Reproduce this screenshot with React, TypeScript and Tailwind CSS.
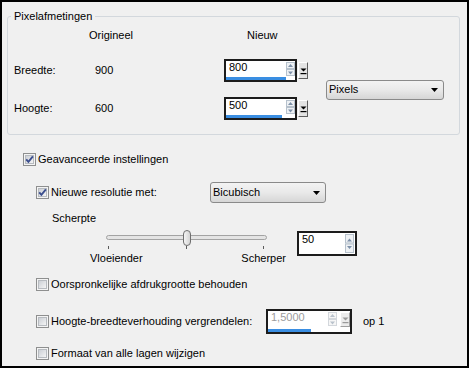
import React from "react";

function CheckBox({ checked }: { checked: boolean }) {
  return (
    <svg width="13" height="13" viewBox="0 0 13 13" className="block shrink-0">
      <defs>
        <linearGradient id="cbg" x1="0" y1="0" x2="1" y2="1">
          <stop offset="0" stopColor="#c9cdd3" />
          <stop offset="1" stopColor="#f7f7f7" />
        </linearGradient>
      </defs>
      <rect x="0.5" y="0.5" width="12" height="12" fill="#f4f4f4" stroke="#8e8f8f" />
      <rect x="2.5" y="2.5" width="8" height="8" fill="url(#cbg)" stroke="#b7bbc0" />
      {checked && (
        <path d="M3.2 6.3 L5.4 8.8 L9.9 3.3" fill="none" stroke="#3b4e8e" strokeWidth="1.9" />
      )}
    </svg>
  );
}

function Arrows({ h, disabled }: { h: number; disabled?: boolean }) {
  const half = h / 2;
  const stroke = disabled ? "#d3d7dc" : "#b6c1cc";
  const tri = disabled ? "#b9c2cc" : "#7d90a8";
  const fill = disabled ? "#f6f6f6" : "#eef1f4";
  return (
    <svg width="9" height={h} viewBox={`0 0 9 ${h}`} className="block shrink-0">
      <rect x="0.5" y="0.5" width="8" height={half - 1} fill={fill} stroke={stroke} />
      <rect x="0.5" y={half + 0.5} width="8" height={half - 1} fill={fill} stroke={stroke} />
      <path d={`M2 ${half - 2} L4.5 ${half - 5} L7 ${half - 2} Z`} fill={tri} />
      <path d={`M2 ${half + 2.5} L4.5 ${half + 5.5} L7 ${half + 2.5} Z`} fill={tri} />
    </svg>
  );
}

function MiniButton({ h, disabled }: { h: number; disabled?: boolean }) {
  const c = disabled ? "#9a9a9a" : "#000";
  return (
    <div
      className={`w-[10px] shrink-0 flex items-center justify-center border-t border-l border-t-white border-l-white border-r border-b ${
        disabled ? "border-r-[#a0a0a0] border-b-[#a0a0a0] bg-[#ececec]" : "border-r-[#5e5e5e] border-b-[#5e5e5e] bg-[#e4e4e4]"
      }`}
      style={{ height: h }}
    >
      <svg width="7" height="8" viewBox="0 0 7 8" className="block">
        <path d="M0.5 1.5 L6.5 1.5 L3.5 4.5 Z" fill={c} />
        <rect x="0.5" y="6" width="6" height="1.2" fill={c} />
      </svg>
    </div>
  );
}

function SpinBox({
  value,
  w,
  h,
  textW,
  bar,
  arrowsH,
  mini,
  disabled,
}: {
  value: string;
  w: number;
  h: number;
  textW: number;
  bar?: number;
  arrowsH: number;
  mini?: "outside" | "inside";
  disabled?: boolean;
}) {
  return (
    <div className="flex items-center shrink-0">
      <div
        className="border-2 border-[#1c1c1c] bg-white flex items-start shrink-0"
        style={{ width: w, height: h }}
      >
        <div className="flex flex-col justify-between h-full shrink-0" style={{ width: textW }}>
          <span className={`pl-[3px] h-[13px] ${disabled ? "text-[#9c9c9c]" : "text-black"}`}>{value}</span>
          {bar ? <div className="h-[3px] bg-[#3a8ee2]" style={{ width: bar }} /> : <div />}
        </div>
        <div className="mt-[1px]">
          <Arrows h={arrowsH} disabled={disabled} />
        </div>
        {mini === "inside" && (
          <div className="ml-[3px] mt-[1px]">
            <MiniButton h={15} disabled={disabled} />
          </div>
        )}
      </div>
      {mini === "outside" && (
        <div className="ml-[1px]">
          <MiniButton h={17} />
        </div>
      )}
    </div>
  );
}

function Dropdown({ label, w, h }: { label: string; w: number; h: number }) {
  return (
    <div
      className="flex items-center justify-between rounded-[3px] border border-[#8a8a8a] bg-gradient-to-b from-[#f3f3f3] via-[#e9e9e9] to-[#d6d6d6] pl-[2px] pr-[5px] shrink-0"
      style={{ width: w, height: h }}
    >
      <span>{label}</span>
      <svg width="7" height="4" viewBox="0 0 7 4" className="block">
        <path d="M0 0 L7 0 L3.5 4 Z" fill="#000" />
      </svg>
    </div>
  );
}

function CheckRow({ checked, label }: { checked: boolean; label: string }) {
  return (
    <div className="flex items-center h-[13px]">
      <CheckBox checked={checked} />
      <span className="ml-[2px]">{label}</span>
    </div>
  );
}

export default function App() {
  return (
    <div className="w-[469px] h-[368px] border-2 border-black bg-[#f0f0f0] text-[11px] leading-[13px] text-black font-['Liberation_Sans',Arial,sans-serif] flex flex-col overflow-hidden">
      {/* Group box */}
      <div className="mt-[14px] ml-[5px] w-[453px] h-[119px] border border-[#d3d8dd] rounded-[3px] flex flex-col shrink-0">
        <span className="-mt-[7px] ml-[3px] px-[3px] bg-[#f0f0f0] self-start h-[13px]">Pixelafmetingen</span>
        <div className="mt-[6px] flex pl-[81px]">
          <span className="w-[158px]">Origineel</span>
          <span>Nieuw</span>
        </div>
        <div className="mt-[17px] flex items-center">
          <div className="flex flex-col gap-[15px] pl-[6px]">
            <div className="flex items-center h-[23px]">
              <span className="w-[81px]">Breedte:</span>
              <span className="w-[129px]">900</span>
              <SpinBox value="800" w={73} h={23} textW={60} bar={60} arrowsH={14} mini="outside" />
            </div>
            <div className="flex items-center h-[23px]">
              <span className="w-[81px]">Hoogte:</span>
              <span className="w-[129px]">600</span>
              <SpinBox value="500" w={73} h={23} textW={60} bar={56} arrowsH={14} mini="outside" />
            </div>
          </div>
          <div className="ml-[18px]">
            <Dropdown label="Pixels" w={118} h={20} />
          </div>
        </div>
      </div>

      {/* Advanced */}
      <div className="mt-[18px] ml-[21px]">
        <CheckRow checked label="Geavanceerde instellingen" />
      </div>

      <div className="mt-[16px] ml-[34px] flex items-center h-[21px]">
        <CheckBox checked />
        <span className="ml-[2px] w-[159px]">Nieuwe resolutie met:</span>
        <Dropdown label="Bicubisch" w={116} h={21} />
      </div>

      <div className="mt-[9px] ml-[50px] h-[13px]">Scherpte</div>

      <div className="mt-[5px] ml-[88px] flex items-start">
        <div className="w-[196px] flex flex-col">
          <div className="relative h-[16px]">
            <div className="absolute left-[16px] top-[5px] w-[161px] h-[5px] rounded-full border border-[#a3a3a3] bg-[#e4e4e4]" />
            <div className="absolute left-[93px] top-0 w-[8px] h-[16px] rounded-[4px] border border-[#6f6f6f] bg-gradient-to-r from-[#f4f4f4] to-[#d4d4d4]" />
          </div>
          <div className="flex h-[4px]">
            <div className="ml-[18px] w-[1px] h-[3px] bg-[#5a5a5a]" />
            <div className="ml-[77px] w-[1px] h-[3px] bg-[#5a5a5a]" />
            <div className="ml-[76px] w-[1px] h-[3px] bg-[#5a5a5a]" />
          </div>
          <div className="mt-[2px] flex justify-between">
            <span>Vloeiender</span>
            <span>Scherper</span>
          </div>
        </div>
        <div className="ml-[11px] mt-[1px]">
          <SpinBox value="50" w={60} h={25} textW={46} arrowsH={19} />
        </div>
      </div>

      <div className="mt-[13px] ml-[34px]">
        <CheckRow checked={false} label="Oorspronkelijke afdrukgrootte behouden" />
      </div>

      <div className="mt-[18px] ml-[34px] flex items-center h-[25px]">
        <CheckBox checked={false} />
        <span className="ml-[2px] w-[215px]">Hoogte-breedteverhouding vergrendelen:</span>
        <SpinBox value="1,5000" w={86} h={25} textW={60} bar={43} arrowsH={14} mini="inside" disabled />
        <span className="ml-[11px]">op 1</span>
      </div>

      <div className="mt-[13px] ml-[34px]">
        <CheckRow checked={false} label="Formaat van alle lagen wijzigen" />
      </div>
    </div>
  );
}
